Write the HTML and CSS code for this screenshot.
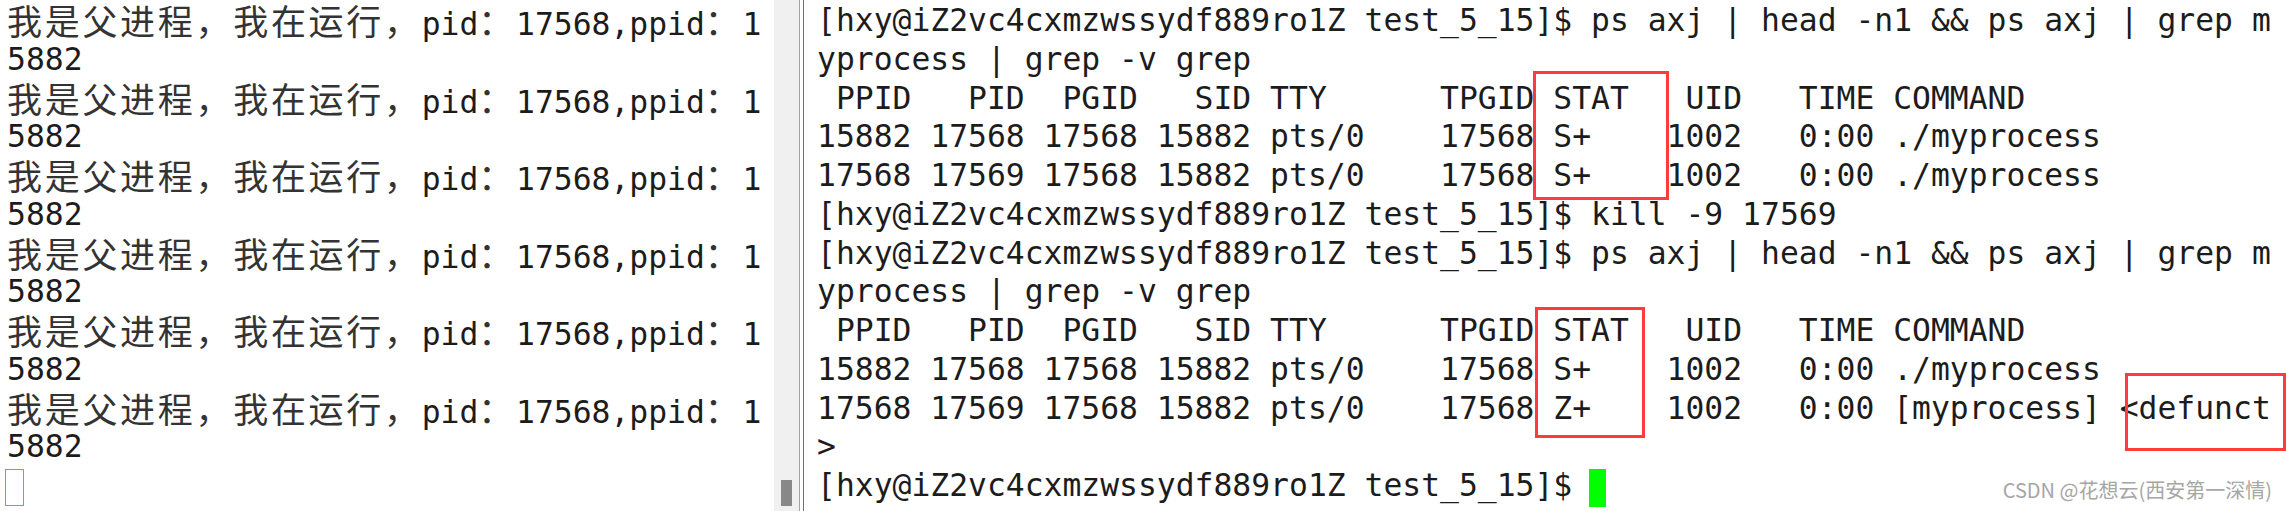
FILE: index.html
```html
<!DOCTYPE html>
<html lang="zh-CN">
<head>
<meta charset="utf-8">
<title>terminal</title>
<link rel="stylesheet" href="styles.css">
</head>
<body>
<div class="screen">
  <div class="pane pane-left">
    <div class="row"><span class="cjk">我是父进程，我在运行，</span>pid<span class="cjk">：</span>17568,ppid<span class="cjk">：</span>1</div>
    <div class="row">5882</div>
    <div class="row"><span class="cjk">我是父进程，我在运行，</span>pid<span class="cjk">：</span>17568,ppid<span class="cjk">：</span>1</div>
    <div class="row">5882</div>
    <div class="row"><span class="cjk">我是父进程，我在运行，</span>pid<span class="cjk">：</span>17568,ppid<span class="cjk">：</span>1</div>
    <div class="row">5882</div>
    <div class="row"><span class="cjk">我是父进程，我在运行，</span>pid<span class="cjk">：</span>17568,ppid<span class="cjk">：</span>1</div>
    <div class="row">5882</div>
    <div class="row"><span class="cjk">我是父进程，我在运行，</span>pid<span class="cjk">：</span>17568,ppid<span class="cjk">：</span>1</div>
    <div class="row">5882</div>
    <div class="row"><span class="cjk">我是父进程，我在运行，</span>pid<span class="cjk">：</span>17568,ppid<span class="cjk">：</span>1</div>
    <div class="row">5882</div>
    <div class="row"><span class="cursor-hollow"></span></div>
  </div>
  <div class="scrollbar"><div class="thumb"></div></div>
  <div class="pane pane-right">
    <div class="row">[hxy@iZ2vc4cxmzwssydf889ro1Z test_5_15]$ ps axj | head -n1 &amp;&amp; ps axj | grep m</div>
    <div class="row">yprocess | grep -v grep</div>
    <div class="row"> PPID   PID  PGID   SID TTY      TPGID STAT   UID   TIME COMMAND</div>
    <div class="row">15882 17568 17568 15882 pts/0    17568 S+    1002   0:00 ./myprocess</div>
    <div class="row">17568 17569 17568 15882 pts/0    17568 S+    1002   0:00 ./myprocess</div>
    <div class="row">[hxy@iZ2vc4cxmzwssydf889ro1Z test_5_15]$ kill -9 17569</div>
    <div class="row">[hxy@iZ2vc4cxmzwssydf889ro1Z test_5_15]$ ps axj | head -n1 &amp;&amp; ps axj | grep m</div>
    <div class="row">yprocess | grep -v grep</div>
    <div class="row"> PPID   PID  PGID   SID TTY      TPGID STAT   UID   TIME COMMAND</div>
    <div class="row">15882 17568 17568 15882 pts/0    17568 S+    1002   0:00 ./myprocess</div>
    <div class="row">17568 17569 17568 15882 pts/0    17568 Z+    1002   0:00 [myprocess] &lt;defunct</div>
    <div class="row">&gt;</div>
    <div class="row">[hxy@iZ2vc4cxmzwssydf889ro1Z test_5_15]$ <span class="cursor-solid"></span></div>
  </div>

  <div class="mark mark-1"></div>
  <div class="mark mark-2"></div>
  <div class="mark mark-3"></div>
  <div class="watermark">CSDN @花想云(西安第一深情)</div>
</div>
</body>
</html>
```

FILE: styles.css
```css
html, body {
  margin: 0;
  padding: 0;
  background: #ffffff;
}

.screen {
  position: relative;
  display: flex;
  width: 2286px;
  height: 511px;
  overflow: hidden;
  background: #ffffff;
}

.pane {
  box-sizing: border-box;
  height: 511px;
  padding-top: 1px;
  font-family: "DejaVu Sans Mono", "Liberation Mono", monospace;
  font-size: 31.36px;
  line-height: 38.76px;
  color: #1c1c1c;
}

.row {
  height: 38.76px;
  white-space: pre;
}

.pane-left {
  width: 774px;
  padding-left: 7px;
  overflow: hidden;
}

.cjk {
  font-family: "Noto Sans CJK SC", "Noto Sans CJK JP", sans-serif;
  font-size: 35px;
  letter-spacing: 2.7px;
  color: #333333;
}

.cursor-hollow {
  display: inline-block;
  box-sizing: border-box;
  width: 19px;
  height: 37px;
  margin-left: -2px;
  border: 1px solid #1fe81f;
  vertical-align: -10px;
}

.cursor-solid {
  display: inline-block;
  width: 17px;
  height: 38px;
  margin-left: -2px;
  background: #00ff00;
  vertical-align: -11px;
}

.scrollbar {
  box-sizing: border-box;
  flex: none;
  width: 26px;
  height: 511px;
  margin-right: 3px;
  background: #f0f0f0;
  border-right: 1px solid #a3a3a3;
  display: flex;
  flex-direction: column;
  justify-content: flex-end;
  padding: 0 0 5px 7px;
}

.thumb {
  width: 11px;
  height: 26px;
  background: #888888;
}

.pane-right {
  flex: 1;
  min-width: 0;
  border-left: 1px solid #2f7fd3;
  padding-left: 13px;
}

.mark {
  position: absolute;
  box-sizing: border-box;
  border: 3px solid #ff3b3b;
}

.mark-1 {
  left: 1533px;
  top: 71px;
  width: 136px;
  height: 129px;
}

.mark-2 {
  left: 1535px;
  top: 307px;
  width: 110px;
  height: 131px;
}

.mark-3 {
  left: 2125px;
  top: 373px;
  width: 161px;
  height: 78px;
}

.watermark {
  position: absolute;
  right: 14px;
  top: 477px;
  font-family: "Noto Sans CJK SC", "Noto Sans CJK JP", sans-serif;
  font-size: 20px;
  line-height: 26px;
  color: #a6a6a6;
  white-space: nowrap;
}
```
